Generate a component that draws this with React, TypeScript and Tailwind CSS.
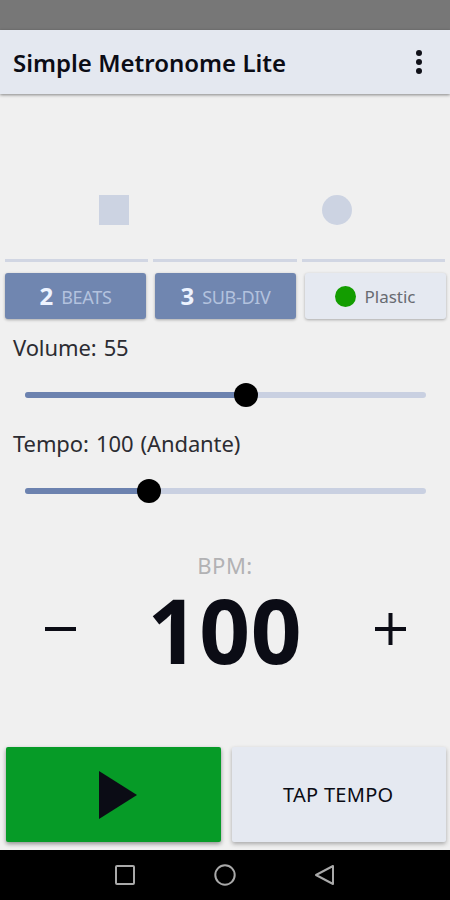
type SliderProps = {
  label: string;
  value: number;
  min: number;
  max: number;
};

const segments = ['first', 'second', 'third'];

function Slider({ label, value, min, max }: SliderProps) {
  const percent = ((value - min) / (max - min)) * 100;

  return (
    <section className="h-24 pl-[13px] pr-3">
      <p className="h-[30px] text-[22px] leading-[30px] font-normal tracking-[-0.1px] text-[#2c2c32] [word-spacing:1.5px]">
        {label}
      </p>
      <div className="ml-3 mr-3 mt-[21px] flex h-6 items-center">
        <div className="relative h-[6px] w-full rounded-full bg-[#c9d0e1]">
          <div className="h-full rounded-full bg-[#6c82af]" style={{ width: `${percent}%` }} />
          <div
            className="absolute top-1/2 size-6 -translate-x-1/2 -translate-y-1/2 rounded-full bg-black"
            style={{ left: `${percent}%` }}
          />
        </div>
      </div>
    </section>
  );
}

function CountButton({ count, label }: { count: number; label: string }) {
  return (
    <button className="flex h-[46px] items-center justify-center gap-2 rounded-[3px] bg-[#7086b0] shadow-[0_1px_3px_rgba(0,0,0,0.3)]">
      <span className="text-[24px] leading-none font-bold text-[#edf3ff]">{count}</span>
      <span className="pt-px text-[18px] leading-none font-normal tracking-[-0.3px] text-[#b3c2de]">{label}</span>
    </button>
  );
}

export default function App() {
  return (
    <div className="flex h-[900px] w-[450px] flex-col overflow-hidden bg-[#f0f0f0] font-['Noto_Sans',sans-serif] text-[#0b0c15]">
      <div className="h-[30px] shrink-0 bg-[#777777]" />

      <header className="flex h-16 shrink-0 items-center justify-between bg-[#e4e8f0] pl-[13px] pr-7 shadow-[0_1px_3px_rgba(0,0,0,0.45)]">
        <h1 className="pt-px text-[24px] leading-none font-semibold">Simple Metronome Lite</h1>
        <button aria-label="Menu" className="flex flex-col gap-[3px]">
          <span className="size-[6px] rounded-full bg-[#101119]" />
          <span className="size-[6px] rounded-full bg-[#101119]" />
          <span className="size-[6px] rounded-full bg-[#101119]" />
        </button>
      </header>

      <main className="flex flex-1 flex-col">
        {/* Beat indicators */}
        <div className="grid h-[165px] grid-cols-2 px-[3px] pt-[101px]">
          <div className="ml-24 size-[30px] bg-[#ccd3e2]" />
          <div className="ml-[97px] size-[30px] rounded-full bg-[#ccd3e2]" />
        </div>

        {/* Sub-division segments */}
        <div className="grid grid-cols-3 gap-[5px] px-[5px]">
          {segments.map((segment) => (
            <div key={segment} className="h-[3px] bg-[#d1d6e3]" />
          ))}
        </div>

        <div className="mt-[11px] grid grid-cols-3 gap-[9px] pl-[5px] pr-1">
          <CountButton count={2} label="BEATS" />
          <CountButton count={3} label="SUB-DIV" />
          <button className="flex h-[46px] items-center justify-center gap-2 rounded-[3px] bg-[#e5e9f1] shadow-[0_1px_3px_rgba(0,0,0,0.3)]">
            <span className="size-[21px] rounded-full bg-[#139d00]" />
            <span className="text-[17px] leading-none font-normal text-[#686b71]">Plastic</span>
          </button>
        </div>

        <div className="mt-[13px]">
          <Slider label="Volume: 55" value={55} min={0} max={100} />
          <Slider label="Tempo: 100 (Andante)" value={100} min={10} max={300} />
        </div>

        {/* Tempo display */}
        <div className="mt-[26px] text-center">
          <p className="h-[30px] text-[22px] leading-[30px] font-normal tracking-[0.5px] text-[#b2b2b4]">BPM:</p>
          <div className="flex h-[98px] items-center justify-between px-[42px]">
            <button aria-label="Slower">
              <svg width="36" height="36" viewBox="0 0 36 36" fill="none" stroke="currentColor" strokeWidth="4">
                <path d="M3 18H34" />
              </svg>
            </button>
            <span className="text-[89px] leading-none font-bold tracking-[0.8px]">100</span>
            <button aria-label="Faster">
              <svg width="36" height="36" viewBox="0 0 36 36" fill="none" stroke="currentColor" strokeWidth="4">
                <path d="M3 18H34M18.5 2V34" />
              </svg>
            </button>
          </div>
        </div>

        <div className="mt-auto mb-2 grid grid-cols-2 gap-[11px] pl-[6px] pr-1">
          <button
            aria-label="Play"
            className="flex h-[95px] items-center justify-center rounded-[2px] bg-[#069b27] shadow-[0_2px_4px_rgba(0,0,0,0.4)]"
          >
            <svg width="38" height="48" viewBox="0 0 38 48" className="ml-[9px]" fill="currentColor">
              <path d="M0 0L38 24L0 48Z" />
            </svg>
          </button>
          <button className="flex h-[95px] items-center justify-center rounded-[2px] bg-[#e5e9f1] pr-px text-[20px] leading-none tracking-[0.3px] shadow-[0_2px_4px_rgba(0,0,0,0.3)]">
            TAP TEMPO
          </button>
        </div>
      </main>

      <nav className="flex h-[50px] shrink-0 items-center justify-center gap-[78px] bg-black text-[#a9a9a9]">
        <svg width="22" height="22" viewBox="0 0 22 22" fill="none" stroke="currentColor" strokeWidth="2">
          <rect x="2" y="2" width="18" height="18" rx="1" />
        </svg>
        <svg width="22" height="22" viewBox="0 0 22 22" fill="none" stroke="currentColor" strokeWidth="2">
          <circle cx="11" cy="11" r="9.7" />
        </svg>
        <svg width="22" height="22" viewBox="0 0 22 22" fill="none" stroke="currentColor" strokeWidth="2" strokeLinejoin="round">
          <path d="M19 2V20L2 11Z" />
        </svg>
      </nav>
    </div>
  );
}
